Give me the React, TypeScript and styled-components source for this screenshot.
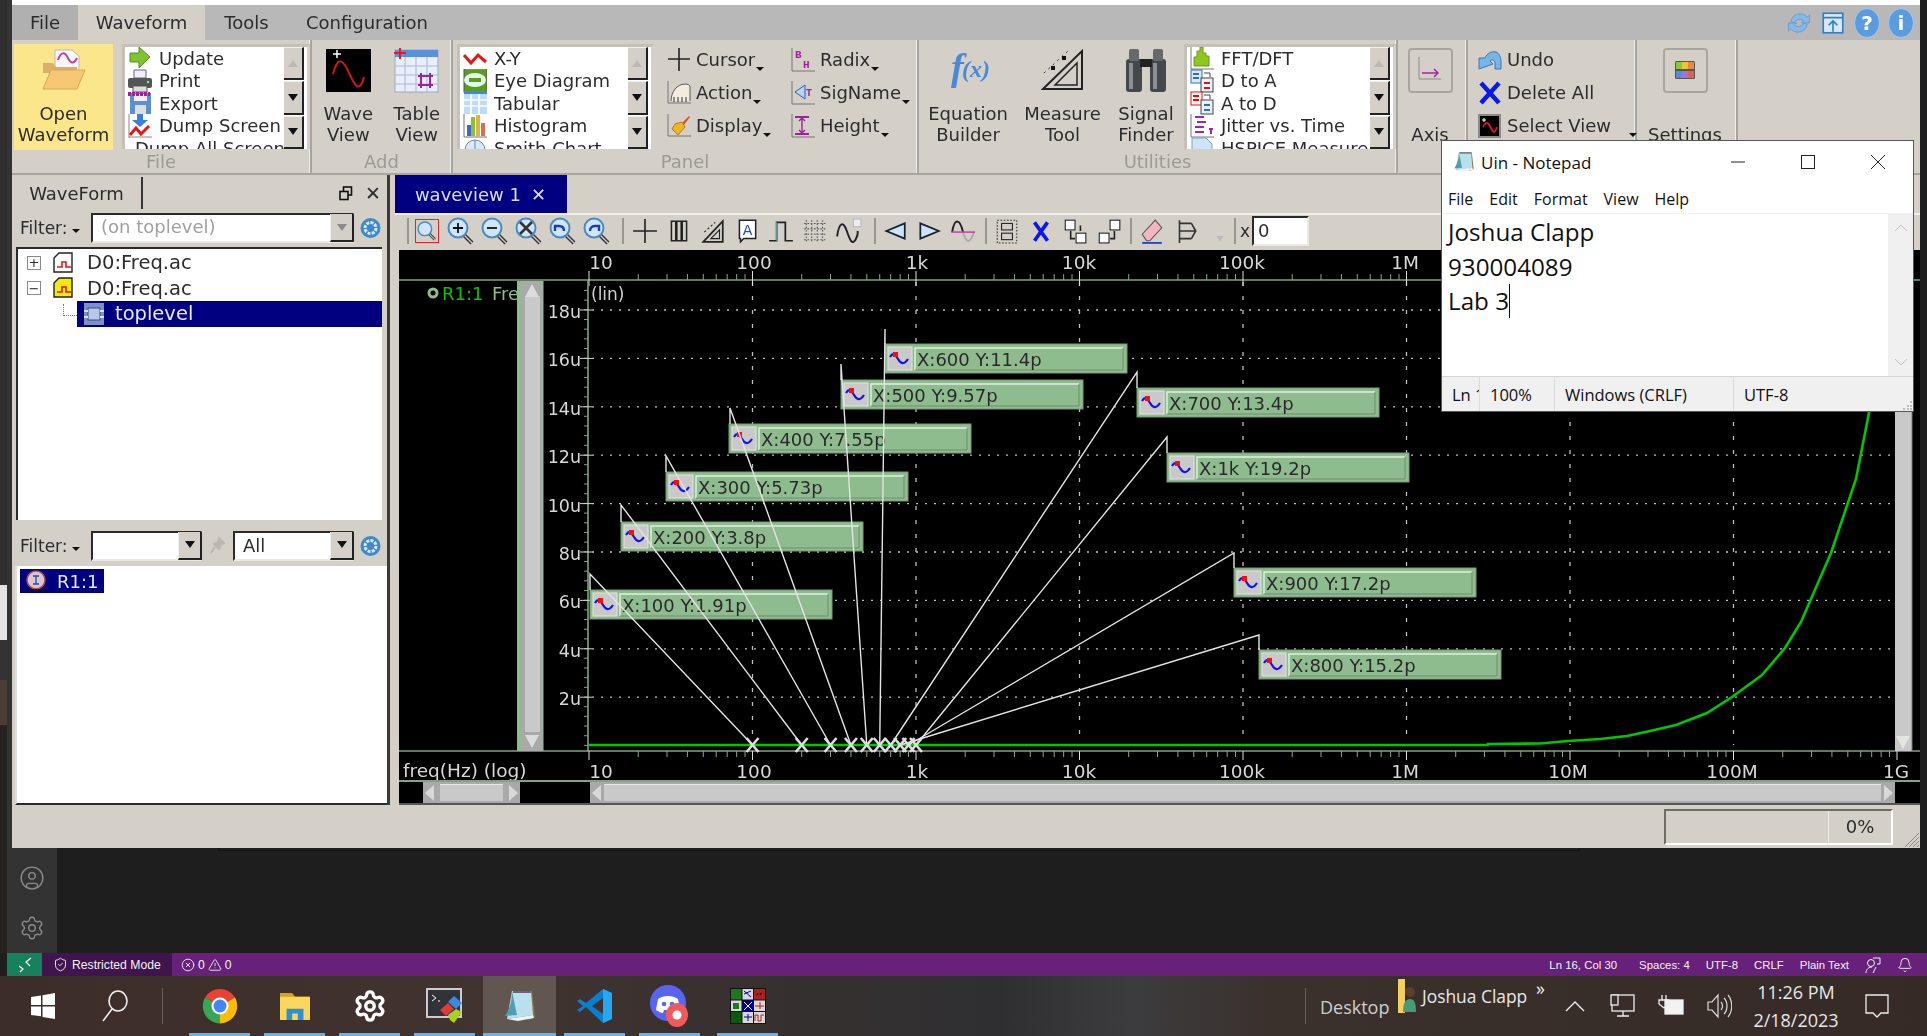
import React from "react";
import styled, { createGlobalStyle } from "styled-components";
import { CircleUser, Settings as GearIcon, ShieldCheck, Bell, CircleX, TriangleAlert } from "lucide-react";

const GlobalStyle = createGlobalStyle`
  html, body { margin: 0; padding: 0; background: #1e1e1e; overflow: hidden; }
  * { box-sizing: border-box; }
`;

const QT_FONT = `"DejaVu Sans", "Liberation Sans", sans-serif`;
const WIN_FONT = `"Open Sans", "Noto Sans", sans-serif`;
const UI_FONT = `"Liberation Sans", Arial, sans-serif`;

const Page = styled.div`
  width: 1927px;
  height: 1036px;
  display: flex;
  flex-direction: column;
  position: relative;
  overflow: hidden;
`;

/* ---- dark editor behind the windows ---- */
const Desk = styled.div`
  height: 976px;
  display: flex;
  flex-direction: column;
  background: #1e1e1e;
`;
const DeskRow = styled.div`
  flex: 1;
  display: flex;
`;
const EdgeStrip = styled.div`
  width: 7px;
  background: linear-gradient(#2f2f2f 0 585px, #e4e4e4 585px 640px, #333 640px 680px, #4a3d33 680px 725px, #252220 725px);
`;
const ActivityBar = styled.div`
  width: 50px;
  background: #333;
  display: flex;
  flex-direction: column;
  justify-content: flex-end;
  align-items: center;
  gap: 24px;
  padding-bottom: 12px;
  color: #8a8a8a;
`;
const Editor = styled.div`
  flex: 1;
  padding-left: 161px;
`;
const PanelEdge = styled.div`
  width: 1362px;
  height: 851px;
  border: 1px solid #111;
  border-top: 0;
`;
const VsStatus = styled.div`
  height: 23px;
  margin-left: 7px;
  background: #68217a;
  color: #f2f2f2;
  display: flex;
  align-items: center;
  font: 12.2px ${UI_FONT};
`;
const RemoteBtn = styled.div`
  width: 35px;
  height: 100%;
  background: #16825d;
  display: flex;
  align-items: center;
  justify-content: center;
`;
const Restricted = styled.div`
  width: 130px;
  height: 100%;
  background: #40144f;
  display: flex;
  align-items: center;
  gap: 4px;
  padding-left: 11px;
`;
const StatusCounts = styled.div`
  display: flex;
  align-items: center;
  gap: 3px;
  margin-left: 9px;
`;
const StatusRight = styled.div`
  margin-left: auto;
  display: flex;
  align-items: center;
  gap: 16px;
  padding-right: 14px;
  font-size: 11.4px;
`;
const StatusPos = styled.span`
  margin-right: 6px;
`;

/* ---- Qt window ---- */
const QtWindow = styled.div`
  position: absolute;
  left: 12px;
  top: 0;
  width: 1908px;
  height: 848px;
  display: flex;
  flex-direction: column;
  background: #d4d0c8;
  color: #2c2c2c;
  font: 18px ${QT_FONT};
  filter: blur(0.4px);
`;
const TopEdge = styled.div`
  height: 5px;
  background: #fff;
`;
const MenuBar = styled.div`
  height: 35px;
  background: #b8b8b8;
  display: flex;
  align-items: stretch;
`;
const MenuTab = styled.div<{ $w: number; $active?: boolean; $dim?: boolean }>`
  width: ${(p) => p.$w}px;
  display: flex;
  align-items: center;
  justify-content: center;
  font-size: 18px;
  background: ${(p) => (p.$active ? "#d4d0c8" : p.$dim ? "#b0b0b0" : "transparent")};
`;
const MenuRight = styled.div`
  margin-left: auto;
  display: flex;
  align-items: center;
  padding-right: 2px;
`;
const HelpIcon = styled.div`
  width: 34px;
  display: flex;
  justify-content: center;
`;
const Ribbon = styled.div`
  height: 135px;
  display: flex;
  border-bottom: 2px solid #a8a59e;
`;
const Group = styled.div<{ $w: number }>`
  width: ${(p) => p.$w}px;
  height: 133px;
  display: flex;
  flex-direction: column;
  border-right: 2px solid #a8a59e;
  box-shadow: inset -1px 0 0 #eee;
  padding-top: 4px;
`;
const GroupBody = styled.div`
  height: 107px;
  display: flex;
  align-items: flex-start;
`;
const GroupLabel = styled.div`
  text-align: center;
  color: #9c9a94;
  line-height: 21px;
`;
const OpenTile = styled.div`
  width: 99px;
  height: 106px;
  margin-left: 2px;
  background: #fce68c;
  display: flex;
  flex-direction: column;
  align-items: center;
  padding-top: 4px;
  line-height: 21px;
  text-align: center;
`;
const BigTool = styled.div<{ $w: number; $ml?: number }>`
  width: ${(p) => p.$w}px;
  margin-left: ${(p) => p.$ml ?? 0}px;
  display: flex;
  flex-direction: column;
  align-items: center;
  text-align: center;
  line-height: 21px;
  padding-top: 4px;
`;
const IconSlot = styled.div`
  height: 44px;
  margin-bottom: 11px;
  display: flex;
  align-items: center;
  justify-content: center;
`;
const FlatButton = styled.div`
  width: 45px;
  height: 45px;
  border: 2px solid #a9a69f;
  border-radius: 4px;
  display: flex;
  align-items: center;
  justify-content: center;
`;
const ListBox = styled.div<{ $w: number; $ml: number }>`
  width: ${(p) => p.$w}px;
  height: 105px;
  margin-left: ${(p) => p.$ml}px;
  display: flex;
  background: #fff;
  border: 3px solid #c4c1b9;
  border-bottom: 0;
  border-right-color: #d4d0c8;
  overflow: hidden;
`;
const ListItems = styled.div`
  flex: 1;
  min-width: 0;
  overflow: hidden;
`;
const ListItem = styled.div`
  height: 22.5px;
  display: flex;
  align-items: center;
  gap: 7px;
  padding-left: 3px;
  white-space: nowrap;
  font-size: 18px;
`;
const ListScroll = styled.div`
  width: 20px;
  display: flex;
  flex-direction: column;
  gap: 1px;
  margin-right: 3px;
`;
const ScrollStep = styled.div`
  flex: 1;
  background: #d4d0c8;
  border-right: 2px solid #222;
  border-bottom: 2px solid #222;
  border-top: 1px solid #eee;
  display: flex;
  align-items: center;
  justify-content: center;
`;
const ArrowDown = styled.div<{ $color?: string }>`
  width: 0;
  height: 0;
  border-left: 5px solid transparent;
  border-right: 5px solid transparent;
  border-top: 7px solid ${(p) => p.$color || "#111"};
`;
const ArrowUp = styled.div`
  width: 0;
  height: 0;
  border-left: 5px solid transparent;
  border-right: 5px solid transparent;
  border-bottom: 7px solid #bdbab3;
`;
const ToolGrid = styled.div`
  margin: -1px 0 0 13px;
  display: grid;
  grid-template-columns: 124px 124px;
  grid-auto-rows: 33px;
`;
const ToolColumn = styled.div`
  margin: -1px 0 0 10px;
  display: grid;
  grid-auto-rows: 33px;
`;
const ToolRow = styled.div<{ $gap?: number }>`
  display: flex;
  align-items: center;
  gap: ${(p) => p.$gap ?? 5}px;
  white-space: nowrap;
  font-size: 18px;
`;
const MiniCaret = styled.span<{ $flush?: boolean }>`
  align-self: flex-end;
  margin: ${(p) => (p.$flush ? "0 0 5px 0" : "0 0 5px -4px")};
  width: 0;
  height: 0;
  border-left: 4px solid transparent;
  border-right: 4px solid transparent;
  border-top: 4px solid #111;
`;

/* ---- body ---- */
const Body = styled.div`
  height: 630px;
  display: flex;
  gap: 5px;
`;
const Dock = styled.div`
  width: 378px;
  display: flex;
  flex-direction: column;
  border-right: 3px solid #3a3a3a;
`;
const DockHead = styled.div`
  height: 34px;
  display: flex;
  align-items: center;
  padding-top: 2px;
`;
const DockTab = styled.div`
  width: 131px;
  height: 100%;
  display: flex;
  align-items: center;
  justify-content: center;
  border-right: 2px solid #333;
`;
const DockBtns = styled.div`
  margin-left: auto;
  display: flex;
  align-items: center;
  gap: 12px;
  padding-right: 6px;
  font-size: 19px;
`;
const FilterRow = styled.div<{ $h: number; $pt?: number }>`
  height: ${(p) => p.$h}px;
  display: flex;
  align-items: center;
  padding: ${(p) => p.$pt ?? 0}px 0 0 8px;
`;
const FilterLabel = styled.div`
  width: 71px;
  font-size: 17px;
  display: flex;
  align-items: center;
  gap: 4px;
`;
const Combo = styled.div<{ $w: number; $muted?: boolean }>`
  width: ${(p) => p.$w}px;
  height: 30px;
  display: flex;
  align-items: center;
  background: #fff;
  border: 2px solid #2b2b2b;
  border-right-color: #d4d0c8;
  border-bottom-color: #ece9e2;
  padding-left: 8px;
  font-size: 18px;
  color: ${(p) => (p.$muted ? "#a0a0a0" : "#2c2c2c")};
`;
const ComboText = styled.span`
  margin-top: -3px;
`;
const ComboArrow = styled.div`
  margin-left: auto;
  width: 24px;
  height: 28px;
  background: #d4d0c8;
  border-left: 1px solid #eee;
  border-right: 2px solid #222;
  border-bottom: 2px solid #222;
  display: flex;
  align-items: center;
  justify-content: center;
  margin-right: -2px;
`;
const GearSlot = styled.div`
  margin-left: 6px;
  display: flex;
`;
const PinSlot = styled.div`
  width: 31px;
  display: flex;
  justify-content: center;
`;
const TreeBox = styled.div`
  height: 273px;
  margin-left: 4px;
  width: 366px;
  background: #fff;
  border-top: 2px solid #2b2b2b;
  border-left: 2px solid #2b2b2b;
  padding-top: 1px;
  font-size: 19.5px;
`;
const TreeRow = styled.div<{ $pad: number }>`
  height: 25.5px;
  display: flex;
  align-items: center;
  padding-left: ${(p) => p.$pad}px;
`;
const Expander = styled.div`
  width: 14px;
  height: 14px;
  border: 1px solid #8a8a8a;
  display: flex;
  align-items: center;
  justify-content: center;
  font: 13px/1 ${QT_FONT};
  margin-right: 12px;
`;
const TreeText = styled.span`
  margin-left: 12px;
`;
const SelectedRow = styled.div`
  flex: 1;
  height: 26px;
  background: #000080;
  color: #e8e8f4;
  display: flex;
  align-items: center;
  padding-left: 6px;
  gap: 10px;
`;
const TreeStub = styled.div`
  width: 14px;
  height: 12px;
  margin-bottom: 8px;
  border-left: 1px dotted #777;
  border-bottom: 1px dotted #777;
`;
const SignalBox = styled.div`
  flex: 1;
  margin-left: 3px;
  background: #fff;
  border-left: 2px solid #ddd;
  border-bottom: 2px solid #2b2b2b;
  padding: 3px 0 0 3px;
  font-size: 18px;
`;
const SignalChip = styled.div`
  width: 84px;
  height: 24px;
  background: #000080;
  color: #e8e8f4;
  display: flex;
  align-items: center;
  padding-left: 5px;
  gap: 10px;
`;
const RightPane = styled.div`
  flex: 1;
  min-width: 0;
  display: flex;
  flex-direction: column;
`;
const TabRow = styled.div`
  height: 38px;
  display: flex;
`;
const WaveTab = styled.div`
  width: 172px;
  background: #000080;
  color: #dcdcf0;
  display: flex;
  align-items: center;
  justify-content: center;
  gap: 10px;
  padding-right: 1px;
  font-size: 18px;
`;
const Toolbar = styled.div`
  height: 37px;
  display: flex;
  align-items: center;
  padding: 0 0 3px 12px;
  border-top: 2px solid #f0eee8;
`;
const ToolSep = styled.div<{ $ml?: number; $mr?: number }>`
  width: 2px;
  height: 26px;
  background: #9a978f;
  margin: 0 ${(p) => p.$mr ?? 1}px 0 ${(p) => p.$ml ?? 0}px;
`;
const ToolCell = styled.div`
  width: 34px;
  display: flex;
  justify-content: center;
  align-items: center;
`;
const ActiveZoom = styled.div`
  width: 24px;
  height: 24px;
  border: 1.5px solid #e8222a;
  display: flex;
  align-items: center;
  justify-content: center;
`;
const OffsetInput = styled.div`
  width: 57px;
  height: 30px;
  margin-left: 2px;
  background: #fff;
  border: 2px solid #2b2b2b;
  border-right-color: #ece9e2;
  border-bottom-color: #ece9e2;
  padding-left: 4px;
  font-size: 18px;
  line-height: 25px;
`;
const OffsetLabel = styled.div`
  margin-left: 4px;
  font-size: 17px;
`;
const ChartPane = styled.div`
  flex: 1;
  margin-left: 4px;
  background: #000;
  display: flex;
  flex-direction: column;
`;
const PlotSvg = styled.svg`
  display: block;
  flex: none;
  font-family: ${QT_FONT};
`;
const HScrollRow = styled.div`
  height: 25px;
  display: flex;
  border-top: 2px solid #84a284;
  border-bottom: 2px solid #555;
`;
const HTrack = styled.div<{ $w: number; $ml: number }>`
  width: ${(p) => p.$w}px;
  margin-left: ${(p) => p.$ml}px;
  background: #a9a9a9;
  display: flex;
  align-items: stretch;
  padding: 2px 2px;
  gap: 3px;
`;
const HThumb = styled.div<{ $inset: number }>`
  flex: 1;
  margin: 0 ${(p) => p.$inset}px;
  background: #c9c9c9;
  border-top: 1px solid #e6e6e6;
`;
const HArrowL = styled.div`
  align-self: center;
  width: 0;
  height: 0;
  border-top: 8px solid transparent;
  border-bottom: 8px solid transparent;
  border-right: 9px solid #d8d8d8;
`;
const HArrowR = styled.div`
  align-self: center;
  width: 0;
  height: 0;
  border-top: 8px solid transparent;
  border-bottom: 8px solid transparent;
  border-left: 9px solid #d8d8d8;
`;
const WinStatus = styled.div`
  height: 43px;
  display: flex;
  align-items: center;
  justify-content: flex-end;
  padding-right: 27px;
  position: relative;
`;
const Progress = styled.div`
  width: 229px;
  height: 36px;
  display: flex;
  border: 2px solid #6f6d68;
  border-right-color: #fff;
  border-bottom-color: #fff;
`;
const ProgressFill = styled.div`
  flex: 1;
`;
const ProgressPct = styled.div`
  width: 63px;
  display: flex;
  align-items: center;
  justify-content: center;
  border-left: 1px solid #f0eee8;
`;
const Grip = styled.svg`
  position: absolute;
  right: 0;
  bottom: 0;
`;

/* ---- notepad ---- */
const Notepad = styled.div`
  position: absolute;
  left: 1441px;
  top: 140px;
  width: 473px;
  height: 272px;
  background: #fff;
  border: 1px solid #555;
  color: #111;
  display: flex;
  flex-direction: column;
  font-family: ${WIN_FONT};
`;
const NoteTitle = styled.div`
  height: 42px;
  display: flex;
  align-items: center;
  padding-left: 11px;
  gap: 6px;
  font-size: 17px;
`;
const NoteControls = styled.div`
  margin-left: auto;
  display: flex;
  color: #222;
`;
const NoteControl = styled.div`
  width: 70px;
  display: flex;
  justify-content: center;
  align-items: center;
`;
const NoteMenu = styled.div`
  height: 31px;
  display: flex;
  align-items: center;
  gap: 16px;
  padding: 2px 0 0 6px;
  font-size: 16px;
  border-bottom: 1px solid #f0f0f0;
`;
const NoteBody = styled.div`
  flex: 1;
  display: flex;
  min-height: 0;
`;
const NoteText = styled.div`
  flex: 1;
  padding: 1px 0 0 6px;
  font-size: 24.2px;
  line-height: 34.5px;
`;
const Caret = styled.span`
  display: inline-block;
  width: 1px;
  height: 34px;
  background: #111;
  vertical-align: top;
`;
const NoteScroll = styled.div`
  width: 25px;
  background: #f0f0f0;
  display: flex;
  flex-direction: column;
  justify-content: space-between;
  align-items: center;
  padding: 8px 0 8px;
  color: #b4b4b4;
`;
const NoteStatus = styled.div`
  height: 35px;
  background: #f0f0f0;
  border-top: 1px solid #d6d6d6;
  display: flex;
  align-items: stretch;
  font-size: 16.5px;
  position: relative;
`;
const NoteCell = styled.div<{ $w: number }>`
  width: ${(p) => p.$w}px;
  display: flex;
  align-items: center;
  padding-left: 10px;
  border-right: 1px solid #dcdcdc;
  white-space: nowrap;
  overflow: hidden;
`;
const NoteLast = styled.div`
  display: flex;
  align-items: center;
  padding-left: 10px;
`;

/* ---- taskbar ---- */
const Taskbar = styled.div`
  height: 60px;
  display: flex;
  align-items: stretch;
  color: #e8e8e8;
  font-family: ${WIN_FONT};
  background: linear-gradient(90deg, #3c2d29 0, #41332f 500px, #35302f 800px, #2f2f32 1000px, #3c3c3e 1130px, #3a302c 1280px, #352a26 100%);
`;
const TaskPlain = styled.div<{ $w: number; $pl?: number }>`
  width: ${(p) => p.$w}px;
  padding-left: ${(p) => p.$pl ?? 0}px;
  display: flex;
  align-items: center;
  justify-content: center;
`;
const TaskDivider = styled.div`
  width: 1px;
  height: 36px;
  align-self: center;
  background: #6a615c;
`;
const TaskApp = styled.div<{ $active?: boolean; $w?: number; $ml?: number }>`
  width: ${(p) => p.$w ?? 61}px;
  margin-left: ${(p) => p.$ml ?? 14}px;
  display: flex;
  align-items: center;
  justify-content: center;
  padding-top: 3px;
  border-bottom: 3px solid #63b3f0;
  background: ${(p) => (p.$active ? "#615650" : "transparent")};
`;
const TrayArea = styled.div`
  margin-left: auto;
  display: flex;
  align-items: stretch;
  padding-right: 22px;
`;
const DesktopLabel = styled.div`
  margin-left: 14px;
  width: 78px;
  font-size: 18px;
  display: flex;
  align-items: center;
  padding-top: 2px;
  color: #cfcfcf;
`;
const Deskband = styled.div`
  width: 153px;
  height: 40px;
  display: flex;
  align-items: center;
  gap: 6px;
  font-size: 17.4px;
  position: relative;
  white-space: nowrap;
`;
const More = styled.span`
  position: absolute;
  right: 6px;
  top: 3px;
  font-size: 18px;
  line-height: 18px;
`;
const TraySlot = styled.div`
  width: 48px;
  display: flex;
  align-items: center;
  justify-content: center;
`;
const Clock = styled.div`
  width: 106px;
  display: flex;
  flex-direction: column;
  align-items: center;
  justify-content: center;
  gap: 8px;
  font-size: 18px;
  line-height: 20px;
`;
const Notify = styled.div`
  width: 56px;
  display: flex;
  align-items: center;
  justify-content: center;
`;

/* ---- icons ---- */
const Ico = ({ s = 24, children }: { s?: number; children: React.ReactNode }) => (
  <svg width={s} height={s} viewBox="0 0 24 24" fill="none">
    {children}
  </svg>
);

const OpenIcon = () => (
  <svg width="46" height="44" viewBox="0 0 46 44" fill="none">
    <path d="M14 2h17l7 6v18H14z" fill="#f7f7f7" stroke="#bbb" />
    <path d="M17 12c3-9 7-8 10-2s6 6 9 0" stroke="#c0409a" strokeWidth="2" />
    <path d="M2 15h10l3 4h21v6H2z" fill="#dcae66" />
    <path d="M10 22h34l-8 19H2z" fill="#f6c873" stroke="#d8a558" />
  </svg>
);
const WaveViewIcon = () => (
  <svg width="45" height="43" viewBox="0 0 45 43">
    <rect width="45" height="43" fill="#000" />
    <path d="M7 5h8M11 1v8" stroke="#fff" strokeWidth="1.5" />
    <path d="M7 25C12 6 17 10 24 26s11 14 14 2" stroke="#d01818" strokeWidth="2" fill="none" />
  </svg>
);
const TableViewIcon = () => (
  <svg width="45" height="45" viewBox="0 0 45 45">
    <rect x="1" y="2" width="43" height="42" fill="#e8eefa" stroke="#9ab" />
    <rect x="1" y="2" width="43" height="7" fill="#5a8ee0" />
    <path d="M1 18h43M1 27h43M1 36h43M11 9v35M22 9v35M33 9v35" stroke="#a8b8d8" />
    <path d="M24 28h15M24 37h15M27 25v15M36 25v15" stroke="#a020a0" strokeWidth="2" />
    <path d="M0 5h12M6 0v11" stroke="#f01818" strokeWidth="2" />
  </svg>
);
const UpdateIcon = () => (
  <Ico>
    <path d="M2 7h9V1l11 10-11 11v-6H2z" fill="#7cc52e" stroke="#5b8a20" />
  </Ico>
);
const PrintIcon = () => (
  <Ico>
    <path d="M6 1h12v8H6z" fill="#eef" stroke="#667" />
    <rect x="0" y="9" width="24" height="10" rx="2" fill="#555" />
    <rect x="5" y="17" width="14" height="6" fill="#ddd" stroke="#555" />
    <circle cx="20" cy="13" r="1.2" fill="#6f6" />
  </Ico>
);
const ExportIcon = () => (
  <Ico>
    <rect x="2" y="2" width="21" height="21" fill="#5b8fcf" />
    <rect x="7" y="14" width="11" height="9" fill="#ddd" />
    <rect x="6" y="3" width="13" height="7" fill="#eef" />
    <path d="M0 3h22" stroke="#a020a0" strokeWidth="4" strokeDasharray="3 1" />
  </Ico>
);
const DumpIcon = () => (
  <Ico>
    <path d="M1 0v24M1 23h23" stroke="#888" />
    <path d="M9 0h6v6h5l-8 7-8-7h5z" fill="#3a7fe0" />
    <path d="M2 21l6-7 5 6 8-8" stroke="#e01818" strokeWidth="3" />
  </Ico>
);
const XYIcon = () => (
  <Ico>
    <path d="M1 9l7 8 7-8 8 7" stroke="#e01818" strokeWidth="3" />
  </Ico>
);
const EyeIcon = () => (
  <Ico>
    <rect x="1" y="0" width="23" height="23" fill="#5e9a1e" stroke="#555" />
    <ellipse cx="12" cy="11" rx="11" ry="7" fill="#dfe" />
    <rect x="6" y="9" width="12" height="4" fill="#5e9a1e" />
    <path d="M2 0h21" stroke="#7c7" />
  </Ico>
);
const TabularIcon = () => (
  <Ico>
    <rect x="1" y="0" width="23" height="3" fill="#3a8ae0" />
    <rect x="1" y="3" width="23" height="20" fill="#bcdcfa" />
    <path d="M1 9h23M1 15h23M8 3v20M16 3v20" stroke="#fff" strokeWidth="1.5" />
  </Ico>
);
const HistIcon = () => (
  <Ico>
    <path d="M1 0v23h23" stroke="#777" />
    <rect x="4" y="11" width="4" height="11" fill="#3a6ad0" />
    <rect x="8" y="3" width="4" height="19" fill="#8cc03a" />
    <rect x="13" y="1" width="4" height="21" fill="#d8b83a" />
    <rect x="18" y="9" width="4" height="13" fill="#e06a5a" />
  </Ico>
);
const SmithIcon = () => (
  <Ico>
    <circle cx="12" cy="14" r="10" fill="#dde8f6" stroke="#6688aa" />
    <path d="M2 14h20M12 4v20" stroke="#6688aa" />
  </Ico>
);
const FftIcon = () => (
  <Ico>
    <path d="M1 0v23h23" stroke="#777" />
    <path d="M4 20V11h3V5h3V1h3v6h3v3h3v10z" fill="#8cc820" stroke="#6a9a10" />
  </Ico>
);
const ConvIcon = ({ from, to }: { from: string; to: string }) => (
  <Ico>
    <rect x="1" y="1" width="11" height="13" fill={from === "red" ? "#fff" : "#dde8f6"} stroke={from} />
    <path d="M3 5h6M3 9h6" stroke={from} strokeWidth="2" />
    <rect x="11" y="9" width="12" height="14" fill={to === "red" ? "#fee" : "#e8f0fc"} stroke="#444" />
    <path d="M14 14h6M14 19h6" stroke={to} strokeWidth="2" />
    <path d="M14 4h6v4" stroke="#444" />
  </Ico>
);
const JitterIcon = () => (
  <Ico>
    <path d="M1 0v23h23" stroke="#777" />
    <path d="M5 3h9M7 8h9M5 13h9M5 18h9M19 15h4M21 15v5" stroke="#a020c0" strokeWidth="2" />
  </Ico>
);
const HspiceIcon = () => (
  <Ico>
    <path d="M2 2h14l6 6v16H2z" fill="#cfe4fa" stroke="#7aa" />
  </Ico>
);
const CursorIcon = () => (
  <Ico>
    <path d="M1 11h22M12 0v23" stroke="#222" strokeWidth="1.6" />
  </Ico>
);
const ActionIcon = () => (
  <Ico>
    <path d="M1 0v22h23" stroke="#777" />
    <path d="M4 20c0-9 6-17 14-17 3 0 5 1 5 3v14" fill="#f2ece0" stroke="#555" />
    <path d="M7 21v-5M11 21v-5M15 21v-5M19 21v-5" stroke="#333" />
  </Ico>
);
const DisplayIcon = () => (
  <Ico>
    <path d="M1 0v22h23" stroke="#777" />
    <path d="M15 9l7-7 1 1-6 8z" fill="#d8541e" />
    <path d="M8 10l7-2 3 5-7 8-6-6z" fill="#f0b428" stroke="#b87d10" />
  </Ico>
);
const RadixIcon = () => (
  <Ico>
    <path d="M1 0v23h23" stroke="#777" />
    <text x="4" y="10" fontSize="11" fontWeight="700" fontFamily="Liberation Mono" fill="#a020a0">B</text>
    <text x="12" y="20" fontSize="11" fontWeight="700" fontFamily="Liberation Mono" fill="#a020a0">H</text>
  </Ico>
);
const SigNameIcon = () => (
  <Ico>
    <path d="M1 0v23h23" stroke="#777" />
    <path d="M14 4v14L4 11z" fill="#b8d4f4" stroke="#2b5fa8" />
    <text x="15" y="15" fontSize="10" fontWeight="700" fontFamily="Liberation Mono" fill="#a020a0">T</text>
  </Ico>
);
const HeightIcon = () => (
  <Ico>
    <path d="M1 0v23h23" stroke="#777" />
    <path d="M4 3h14M4 20h14" stroke="#a020a0" strokeWidth="2" />
    <path d="M11 4v15M8 7l3-3 3 3M8 16l3 3 3-3" stroke="#a020a0" strokeWidth="1.4" />
  </Ico>
);
const FxIcon = () => (
  <svg width="50" height="44" viewBox="0 0 50 44" fill="none">
    <text x="8" y="32" fontFamily="Liberation Serif" fontStyle="italic" fontWeight="700" fontSize="38" fill="#4a88d8">f</text>
    <text x="19" y="29" fontFamily="Liberation Serif" fontStyle="italic" fontWeight="700" fontSize="24" fill="#4a88d8">(x)</text>
  </svg>
);
const MeasureIcon = () => (
  <svg width="44" height="44" viewBox="0 0 44 44" fill="none">
    <path d="M2 41L41 3v38z" stroke="#222" strokeWidth="2" />
    <path d="M14 37L36 15v22z" stroke="#222" strokeWidth="1.5" />
    <path d="M3 25L27 3" stroke="#222" strokeDasharray="2 4" />
    <rect x="10" y="18" width="4" height="4" fill="#111" />
    <rect x="21" y="8" width="4" height="4" fill="#111" />
  </svg>
);
const BinocularIcon = () => (
  <svg width="42" height="44" viewBox="0 0 42 44">
    <rect x="1" y="11" width="16" height="33" rx="3" fill="#44484c" />
    <rect x="25" y="11" width="16" height="33" rx="3" fill="#44484c" />
    <rect x="4" y="1" width="10" height="12" rx="2" fill="#666a6e" />
    <rect x="28" y="1" width="10" height="12" rx="2" fill="#666a6e" />
    <rect x="15" y="11" width="12" height="8" fill="#222" />
    <rect x="4" y="15" width="4" height="26" fill="#8a9096" />
    <rect x="28" y="15" width="4" height="26" fill="#8a9096" />
  </svg>
);
const AxisIcon = () => (
  <svg width="28" height="26" viewBox="0 0 28 26" fill="none">
    <path d="M3 0v22h22" stroke="#8a8a8a" />
    <path d="M6 16h16M18 12l4 4-4 4" stroke="#b020a0" strokeWidth="1.5" />
  </svg>
);
const UndoIcon = () => (
  <Ico>
    <path d="M1 21V10h6C9 5 14 3 18 4c3 1 5 5 5 10v7h-6v-6c0-3-3-4-5-2l3 3z" fill="#78b4e8" stroke="#3a78b8" />
  </Ico>
);
const DeleteIcon = () => (
  <Ico>
    <path d="M3 2l18 20M21 2L3 22" stroke="#0a18e8" strokeWidth="4.5" />
  </Ico>
);
const SelectIcon = () => (
  <Ico>
    <rect x="1" y="1" width="21" height="22" fill="#000" stroke="#8a8a8a" strokeWidth="2" />
    <path d="M5 13c3-6 5-5 8 1s4 5 6-1" stroke="#e01818" strokeWidth="1.8" />
    <path d="M4 6h4M6 4v4" stroke="#fff" />
  </Ico>
);
const PaletteIcon = () => (
  <Ico>
    <rect x="2" y="3" width="20" height="18" rx="1.5" fill="#555" />
    <rect x="3" y="4" width="6" height="7" fill="#8cc83a" />
    <rect x="9" y="4" width="6" height="7" fill="#e8c83a" />
    <rect x="15" y="4" width="6" height="7" fill="#e88a3a" />
    <rect x="3" y="13" width="6" height="7" fill="#5a8ae0" />
    <rect x="9" y="13" width="6" height="7" fill="#9a78d0" />
    <rect x="15" y="13" width="6" height="7" fill="#e06060" />
  </Ico>
);
const RefreshIcon = () => (
  <Ico s={28}>
    <path d="M5 11a8 8 0 0 1 14-4l2-2v7h-7l2-2a5 5 0 0 0-8 2zM19 13a8 8 0 0 1-14 4l-2 2v-7h7l-2 2a5 5 0 0 0 8-2z" fill="#8ab8e4" stroke="#5a94cc" strokeWidth=".6" />
  </Ico>
);
const PanelUpIcon = () => (
  <Ico s={26}>
    <rect x="3" y="3" width="18" height="18" stroke="#2f7fc8" strokeWidth="1.5" fill="#d8e8f4" />
    <path d="M3 7h18M12 20v-9M8 14l4-4 4 4" stroke="#2f7fc8" strokeWidth="1.5" />
  </Ico>
);
const RoundBlue = ({ ch }: { ch: string }) => (
  <svg width="26" height="30" viewBox="0 0 26 30">
    <ellipse cx="13" cy="15" rx="12.5" ry="14.5" fill="#5a9ce0" stroke="#a4c8ec" />
    <text x="13" y="22" textAnchor="middle" fontSize="20" fontWeight="700" fontFamily="DejaVu Sans" fill="#fff">{ch}</text>
  </svg>
);
const FilterGear = () => (
  <svg width="21" height="22" viewBox="0 0 21 22">
    <circle cx="10.5" cy="11" r="10" fill="#3e88cc" />
    <circle cx="10.5" cy="11" r="5.5" fill="none" stroke="#d8e8f6" strokeWidth="3" strokeDasharray="3 1.2" />
  </svg>
);
const DocIcon = ({ fill }: { fill: string }) => (
  <svg width="22" height="22" viewBox="0 0 22 22" fill="none">
    <path d="M1 6l5-5h13v19H1z" fill={fill} stroke="#222" strokeWidth="1.4" />
    <path d="M4 15h5v-5h4v5h5" stroke="#e01818" strokeWidth="1.6" />
  </svg>
);
const ModuleIcon = () => (
  <svg width="22" height="24" viewBox="0 0 22 24">
    <rect x="1" y="1" width="20" height="22" fill="#7f8fc8" />
    <rect x="5" y="6" width="12" height="12" fill="#b8c8ea" stroke="#34508c" />
    <path d="M1 9h4M1 15h4M17 9h4M17 15h4" stroke="#dfe6f6" strokeWidth="2" />
  </svg>
);
const ResistorIcon = () => (
  <svg width="22" height="22" viewBox="0 0 22 22">
    <circle cx="11" cy="10" r="9" fill="#d9c6d2" stroke="#b04a50" strokeWidth="1.5" />
    <path d="M8 6h6M11 6v8M8 14h6" stroke="#2a4a9a" strokeWidth="1.3" />
    <path d="M1 20h20" stroke="#111" strokeWidth="2" strokeDasharray="2 1" />
  </svg>
);
const PinIcon = () => (
  <svg width="16" height="20" viewBox="0 0 16 20" fill="none">
    <path d="M9 2l5 5-3 2-2 4-5-5 4-2zM5 11l-4 6" stroke="#bbb8b0" strokeWidth="2" fill="#bbb8b0" />
  </svg>
);
const Lens = ({ children, s = 28 }: { children?: React.ReactNode; s?: number }) => (
  <svg width={s} height={s} viewBox="0 0 28 28" fill="none">
    <path d="M17 18l8 8" stroke="#333" strokeWidth="4" />
    <path d="M17 18l8 8" stroke="#ccc" strokeWidth="1.5" />
    <circle cx="11" cy="11" r="9.5" fill="#cfe6fa" stroke="#4a8ac4" strokeWidth="2" />
    {children}
  </svg>
);
const ToolGlyph = ({ children }: { children: React.ReactNode }) => <Ico s={26}>{children}</Ico>;

const toolGroupA = [
  <Lens key="p"><path d="M6 11h10M11 6v10" stroke="#111" strokeWidth="1.8" /></Lens>,
  <Lens key="m"><path d="M6 11h10" stroke="#111" strokeWidth="1.8" /></Lens>,
  <Lens key="f"><path d="M5 5l12 12M17 5L5 17" stroke="#333" strokeWidth="2.6" /></Lens>,
  <Lens key="u"><path d="M6 14V9h4c2 0 5 1 5 5" stroke="#1a3ac8" strokeWidth="2.4" /></Lens>,
  <Lens key="r"><path d="M16 14V9h-4c-2 0-5 1-5 5" stroke="#1a3ac8" strokeWidth="2.4" /></Lens>,
];
const toolGroupB = [
  <ToolGlyph key="a"><path d="M1 12h22M12 1v22" stroke="#222" strokeWidth="1.5" /></ToolGlyph>,
  <ToolGlyph key="b"><path d="M5 3h4v18H5zM10 3h4v18h-4zM15 3h4v18h-4z" stroke="#222" strokeWidth="1.4" /></ToolGlyph>,
  <ToolGlyph key="c"><path d="M3 22L21 3v19z" stroke="#222" strokeWidth="1.6" /><path d="M10 19l8-8v8z" stroke="#222" /><path d="M4 13l10-9" stroke="#222" strokeDasharray="2 2" /></ToolGlyph>,
  <ToolGlyph key="d"><path d="M5 2h15v17H9l-3 3v-3H5z" fill="#fff" stroke="#222" strokeWidth="1.4" /><text x="12.5" y="16" textAnchor="middle" fontSize="13" fontFamily="DejaVu Sans" fill="#1a4ac8">A</text></ToolGlyph>,
  <ToolGlyph key="e"><path d="M1 21h7V4h8v17h7" stroke="#222" strokeWidth="1.6" /><path d="M8 21V4" stroke="#6aa" /></ToolGlyph>,
  <ToolGlyph key="f"><path d="M4 2v21M9 2v21M14 2v21M19 2v21M2 5h20M2 10h20M2 15h20M2 20h20" stroke="#555" strokeDasharray="1.5 1.5" /></ToolGlyph>,
  <ToolGlyph key="g"><path d="M1 17C3 3 7 3 10 12s5 13 8 8 2-6 2-8" stroke="#222" strokeWidth="1.8" /><rect x="16" y="1" width="7" height="7" stroke="#bbb" fill="#eee" /></ToolGlyph>,
];
const toolGroupC = [
  <ToolGlyph key="l"><path d="M21 5v14L4 12z" fill="#cfe2f8" stroke="#123" strokeWidth="1.6" /></ToolGlyph>,
  <ToolGlyph key="r"><path d="M4 5v14l17-7z" fill="#cfe2f8" stroke="#123" strokeWidth="1.6" /></ToolGlyph>,
  <ToolGlyph key="w"><path d="M2 13C4 0 9 0 12 13" stroke="#222" strokeWidth="1.8" /><path d="M12 13c3 11 7 11 10 0" stroke="#aaa" strokeWidth="1.8" /><path d="M1 13h22" stroke="#c040b0" strokeWidth="1.4" /></ToolGlyph>,
];
const toolGroupD = [
  <ToolGlyph key="s"><rect x="3" y="2" width="18" height="21" stroke="#333" strokeDasharray="1.5 1.5" /><rect x="7" y="5" width="10" height="6" stroke="#222" /><rect x="7" y="14" width="10" height="6" stroke="#222" /></ToolGlyph>,
  <ToolGlyph key="x"><path d="M6 4l12 17M18 4L6 21" stroke="#0a18e8" strokeWidth="3.4" /></ToolGlyph>,
  <ToolGlyph key="c1"><rect x="3" y="2" width="9" height="9" fill="#fff" stroke="#222" /><rect x="13" y="14" width="9" height="9" fill="#fff" stroke="#222" /><path d="M8 12v7h4M17 7v5" stroke="#222" strokeWidth="1.5" /></ToolGlyph>,
  <ToolGlyph key="c2"><rect x="13" y="2" width="9" height="9" fill="#fff" stroke="#222" /><rect x="3" y="14" width="9" height="9" fill="#fff" stroke="#222" /><path d="M17 12v7h-4" stroke="#222" strokeWidth="1.5" /></ToolGlyph>,
];

/* ---- plot data ---- */
const xOf = (f: number) => 589 + 163.5 * (Math.log10(f) - 1);
const ZERO_Y = 745;
const Y_STEP = 48.4;
const yLabels = ["18u", "16u", "14u", "12u", "10u", "8u", "6u", "4u", "2u"];
const xLabels: [string, number][] = [["10", 601], ["100", 754], ["1k", 917], ["10k", 1079], ["100k", 1242], ["1M", 1405], ["10M", 1568], ["100M", 1732], ["1G", 1896]];
const decades = [10, 100, 1e3, 1e4, 1e5, 1e6, 1e7, 1e8, 1e9];
const minors = decades.slice(0, -1).flatMap((d) => [2, 3, 4, 5, 6, 7, 8, 9].map((m) => xOf(d * m)));

const markers = [
  { label: "X:600 Y:11.4p", f: 600, x: 885, y: 344, px: 885, py: 329 },
  { label: "X:500 Y:9.57p", f: 500, x: 841, y: 380, px: 841, py: 364 },
  { label: "X:400 Y:7.55p", f: 400, x: 729, y: 424, px: 730, py: 408 },
  { label: "X:300 Y:5.73p", f: 300, x: 666, y: 472, px: 666, py: 456 },
  { label: "X:200 Y:3.8p", f: 200, x: 621, y: 522, px: 621, py: 505 },
  { label: "X:100 Y:1.91p", f: 100, x: 590, y: 590, px: 590, py: 574 },
  { label: "X:700 Y:13.4p", f: 700, x: 1137, y: 388, px: 1137, py: 372 },
  { label: "X:1k Y:19.2p", f: 1000, x: 1167, y: 453, px: 1167, py: 437 },
  { label: "X:900 Y:17.2p", f: 900, x: 1234, y: 568, px: 1234, py: 553 },
  { label: "X:800 Y:15.2p", f: 800, x: 1259, y: 650, px: 1259, py: 635 },
];
const tracePts = "589,745 1488,745 1488,744 1540,743.5 1568,741 1600,739 1627,736 1650,731 1676,725 1707,713 1732,697 1762,675 1785,648 1801,622 1831,553 1856,479 1868,418 1880,350";

const MarkerBox = ({ x, y, label }: { x: number; y: number; label: string }) => (
  <g>
    <rect x={x} y={y} width={242} height={29} fill="#8fbc8f" stroke="#769a76" />
    <rect x={x + 3} y={y + 3} width={24} height={23} fill="#c9c9c9" stroke="#e4e4e4" />
    <path d={`M${x + 30} ${y + 26}V${y + 4}H${x + 238}`} stroke="#dfeedf" strokeWidth="1.5" fill="none" />
    <path d={`M${x + 30} ${y + 26}H${x + 238}V${y + 4}`} stroke="#6e8e6e" fill="none" />
    <path d={`M${x + 5} ${y + 13}c3-5 5-3 8 2s6 6 10 0`} stroke="#1010f0" strokeWidth="2.2" fill="none" />
    <rect x={x + 8} y={y + 8} width={5} height={5} fill="#f01010" />
    <text x={x + 32} y={y + 22} fontSize="18" fill="#2a2a2a">{label}</text>
  </g>
);

const Plot = () => (
  <PlotSvg width="1521" height="530" viewBox="399 250 1521 530">
    <rect x="399" y="250" width="1521" height="530" fill="#000" />
    {/* grid */}
    {yLabels.map((_, i) => (
      <path key={i} d={`M592 ${310 + i * Y_STEP}H1895`} stroke="#bdbdbd" strokeWidth="1.3" strokeDasharray="2 7" />
    ))}
    {decades.slice(1, -1).map((d) => (
      <path key={d} d={`M${xOf(d)} 282V745`} stroke="#bdbdbd" strokeWidth="1.3" strokeDasharray="4 10" />
    ))}
    {/* top and bottom axes */}
    <path d="M399 280H1920M399 751H1920" stroke="#7fa57f" strokeWidth="1.6" />
    {minors.map((x, i) => (
      <path key={i} d={`M${x} 274V280M${x} 751V757`} stroke="#8aa88a" />
    ))}
    {decades.map((d) => (
      <path key={d} d={`M${xOf(d)} 271V286M${xOf(d)} 751V760`} stroke="#e0e0e0" />
    ))}
    {xLabels.map(([t, x]) => (
      <text key={t} x={x} y="269" fontSize="18.5" textAnchor="middle" fill="#d8d8d8">{t}</text>
    ))}
    {xLabels.map(([t, x]) => (
      <text key={t} x={x} y="778" fontSize="18.5" textAnchor="middle" fill="#d8d8d8">{t}</text>
    ))}
    <text x="403" y="777" fontSize="18.5" fill="#d8d8d8">freq(Hz) (log)</text>
    {/* left axis */}
    <path d="M588 281V751" stroke="#7fa57f" strokeWidth="1.6" />
    {Array.from({ length: 48 }, (_, i) => (
      <path key={i} d={`M584 ${745.4 - i * (Y_STEP / 5)}H588`} stroke="#7fa57f" />
    ))}
    {yLabels.map((t, i) => (
      <g key={t}>
        <text x="581" y={318 + i * Y_STEP} fontSize="17.5" textAnchor="end" fill="#d8d8d8">{t}</text>
        <path d={`M580 ${310 + i * Y_STEP}H592`} stroke="#cfd8cf" />
      </g>
    ))}
    <text x="591" y="300" fontSize="17" fill="#cfcfcf">(lin)</text>
    {/* signal name */}
    <circle cx="433" cy="293" r="4" fill="none" stroke="#8fbc8f" strokeWidth="3" />
    <text x="442" y="300" fontSize="18" fill="#00c800">R1:1</text>
    <text x="492" y="300" fontSize="18" fill="#8fbc8f">Fre</text>
    {/* vertical scrollbars */}
    <rect x="517" y="281" width="4" height="470" fill="#8fbc8f" />
    <rect x="521" y="281" width="22" height="470" fill="#a9a9a9" />
    <rect x="525" y="296" width="15" height="436" fill="#c9c9c9" />
    <path d="M532 284l7 13h-14zM532 748l7-13h-14z" fill="#dcdcdc" />
    <path d="M543 281V751" stroke="#8fbc8f" />
    <rect x="1895" y="281" width="17" height="470" fill="#c9c9c9" />
    <path d="M1903 749l7-13h-14z" fill="#e4e4e4" />
    <path d="M1912 281V751" stroke="#777" />
    {/* markers */}
    {markers.map((m) => (
      <MarkerBox key={m.label} x={m.x} y={m.y} label={m.label} />
    ))}
    <polyline points={tracePts} fill="none" stroke="#00c800" strokeWidth="2.6" />
    {markers.map((m) => (
      <path key={m.label} d={`M${xOf(m.f)} ${ZERO_Y}L${m.px} ${m.py}V${m.y}`} stroke="#e4e4e4" strokeWidth="1.4" fill="none" />
    ))}
    {markers.map((m) => {
      const x = xOf(m.f);
      return <path key={m.label} d={`M${x - 6} ${ZERO_Y - 7}l12 14m0-14l-12 14`} stroke="#dedede" strokeWidth="2.6" />;
    })}
  </PlotSvg>
);

/* ---- taskbar icons ---- */
const WindowsLogo = () => (
  <svg width="26" height="26" viewBox="0 0 26 26" fill="#fff">
    <path d="M1 4l10-1.5V12H1zM12.5 2.300L25 0v12H12.500zM1 13.500h10v9.800L1 22zM12.500 13.500H25V26l-12.500-2z" />
  </svg>
);
const SearchGlyph = () => (
  <svg width="28" height="32" viewBox="0 0 28 32" fill="none" stroke="#f0f0f0" strokeWidth="1.6">
    <ellipse cx="17" cy="11" rx="9" ry="10" />
    <path d="M11 19L2 31" />
  </svg>
);
const ChromeLogo = () => (
  <svg width="36" height="36" viewBox="0 0 36 36">
    <path d="M18 18L3 9.500A17.500 17.500 0 0 1 33 9.500z" fill="#ea4335" />
    <path d="M18 18L33 9.500A17.500 17.500 0 0 1 18 35.500z" fill="#fbbc04" />
    <path d="M18 18L18 35.500A17.500 17.500 0 0 1 3 9.500z" fill="#34a853" />
    <circle cx="18" cy="18" r="8.500" fill="#fff" />
    <circle cx="18" cy="18" r="6.500" fill="#4285f4" />
  </svg>
);
const FilesLogo = () => (
  <svg width="32" height="30" viewBox="0 0 34 32">
    <path d="M1 2h13l3 4h16v4H1z" fill="#d9a21b" />
    <rect x="1" y="6" width="32" height="25" rx="1" fill="#fbd75b" />
    <path d="M8 31V19h18v12h-6v-7h-6v7z" fill="#2f8fd8" />
  </svg>
);
const ToolLogo = () => (
  <svg width="38" height="36" viewBox="0 0 38 36">
    <rect x="1" y="1" width="34" height="28" fill="#303438" stroke="#ccc" strokeWidth="2" />
    <path d="M6 7l4 3-4 3M12 13h2" stroke="#fff" fill="none" />
    <path d="M14 22l8-7 6 6-8 7z" fill="#e03a3a" />
    <path d="M22 14l6-6 8 7-6 6z" fill="#3a8ae0" />
    <path d="M22 27l8-6 6 3-8 11-4-3z" fill="#a8d020" />
  </svg>
);
const NotepadLogo = ({ s = 34 }: { s?: number }) => (
  <svg width={s} height={s} viewBox="0 0 34 34">
    <path d="M10 2h19l3 26-6 3z" fill="#8a7a4a" />
    <path d="M9 2h19l2 24-26 4z" fill="#b9e0ec" />
    <path d="M2 27C8 18 9 10 9 2l5 24z" fill="#4f9fb0" />
    <path d="M10 2h18v2H10z" fill="#667" />
    <path d="M4 30l26-4 1 3-16 3z" fill="#e8f4f6" />
  </svg>
);
const VscodeLogo = () => (
  <svg width="36" height="36" viewBox="0 0 36 36">
    <path d="M26 1l9 4v26l-9 4L9 19l-6 5-3-2 6-4-6-5 3-2 6 4z" fill="#0a7fd0" />
    <path d="M26 1l9 4v26l-9 4z" fill="#24a8f2" />
    <path d="M26 10l-11 8 11 8z" fill="#41332f" />
  </svg>
);
const DiscordLogo = () => (
  <svg width="40" height="42" viewBox="0 0 40 42">
    <ellipse cx="18" cy="18" rx="18" ry="18" fill="#5865f2" />
    <path d="M8 14c5-4 15-4 20 0l2 11c-3 2-5 3-7 3l-1-3h-8l-1 3c-2 0-4-1-7-3z" fill="#fff" />
    <circle cx="14" cy="19" r="2.300" fill="#5865f2" />
    <circle cx="22" cy="19" r="2.300" fill="#5865f2" />
    <ellipse cx="27" cy="30" rx="11" ry="12" fill="#f05a5a" />
    <circle cx="27" cy="30" r="4.500" fill="#fff" />
  </svg>
);
const CustomLogo = () => (
  <svg width="36" height="36" viewBox="0 0 36 36">
    <rect width="36" height="36" fill="#111" />
    <rect x="1" y="1" width="10.500" height="10.500" fill="#1a7a1a" />
    <rect x="12.500" y="1" width="10.500" height="10.500" fill="#d8d8d8" />
    <rect x="24" y="1" width="11" height="10.500" fill="#b02020" />
    <rect x="1" y="12.500" width="10.500" height="10.500" fill="#d8d8d8" />
    <rect x="12.500" y="12.500" width="10.500" height="10.500" fill="#0000a0" />
    <rect x="24" y="12.500" width="11" height="10.500" fill="#d8d8d8" />
    <rect x="1" y="24" width="10.500" height="11" fill="#0a5a0a" />
    <rect x="12.500" y="24" width="10.500" height="11" fill="#d8d8d8" />
    <rect x="24" y="24" width="11" height="11" fill="#d8d8d8" />
    <path d="M3 15h6v6H3z" fill="#1a7a1a" />
    <path d="M14 22l8-8M14 14l8 8" stroke="#fff" />
    <path d="M14 6l7-3M14 3l7 6" stroke="#0000a0" />
    <path d="M25 8l3-4 2 4 3-4M25 18h9M30 14v7" stroke="#b02020" />
    <path d="M25 33v-6h3v6h3v-6h3" stroke="#b02020" fill="none" />
    <path d="M14 29h8M18 26v7" stroke="#0000a0" />
  </svg>
);

const NoteGearLines = () => (
  <svg width="14" height="12" viewBox="0 0 14 12" fill="none" stroke="#c4c4c4">
    <path d="M1 9l6-6 6 6" />
  </svg>
);

const App = () => {
  return (
    <Page>
      <GlobalStyle />
      <Desk>
        <DeskRow>
          <EdgeStrip />
          <ActivityBar>
            <CircleUser size={26} strokeWidth={1.3} />
            <GearIcon size={26} strokeWidth={1.3} />
          </ActivityBar>
          <Editor>
            <PanelEdge />
          </Editor>
        </DeskRow>
        <VsStatus>
          <RemoteBtn>
            <svg width="14" height="16" viewBox="0 0 14 16" fill="none" stroke="#fff" strokeWidth="1.2">
              <path d="M1 9l4 3-3 3M13 1L8 5l4 4" />
            </svg>
          </RemoteBtn>
          <Restricted>
            <ShieldCheck size={15} strokeWidth={1.5} />
            Restricted Mode
          </Restricted>
          <StatusCounts>
            <CircleX size={14} strokeWidth={1.5} /> 0 <TriangleAlert size={14} strokeWidth={1.5} /> 0
          </StatusCounts>
          <StatusRight>
            <StatusPos>Ln 16, Col 30</StatusPos>
            <span>Spaces: 4</span>
            <span>UTF-8</span>
            <span>CRLF</span>
            <span>Plain Text</span>
            <svg width="16" height="18" viewBox="0 0 16 18" fill="none" stroke="#f2f2f2">
              <circle cx="6" cy="7" r="3.500" />
              <path d="M1 17c0-4 3-6 6-6M8 2h7v6h-3M8 17l3-6" />
            </svg>
            <Bell size={16} strokeWidth={1.4} />
          </StatusRight>
        </VsStatus>
      </Desk>

      <QtWindow>
        <TopEdge />
        <MenuBar>
          <MenuTab $w={66} $dim>File</MenuTab>
          <MenuTab $w={127} $active>Waveform</MenuTab>
          <MenuTab $w={83}>Tools</MenuTab>
          <MenuTab $w={158}>Configuration</MenuTab>
          <MenuRight>
            <HelpIcon><RefreshIcon /></HelpIcon>
            <HelpIcon><PanelUpIcon /></HelpIcon>
            <HelpIcon><RoundBlue ch="?" /></HelpIcon>
            <HelpIcon><RoundBlue ch="i" /></HelpIcon>
          </MenuRight>
        </MenuBar>
        <Ribbon>
          <Group $w={300}>
            <GroupBody>
              <OpenTile>
                <IconSlot><OpenIcon /></IconSlot>
                Open<br />Waveform
              </OpenTile>
              <ListBox $w={188} $ml={9}>
                <ListItems>
                  <ListItem><UpdateIcon />Update</ListItem>
                  <ListItem><PrintIcon />Print</ListItem>
                  <ListItem><ExportIcon />Export</ListItem>
                  <ListItem><DumpIcon />Dump Screen</ListItem>
                  <ListItem><DumpIcon />Dump All Screens</ListItem>
                </ListItems>
                <ListScroll>
                  <ScrollStep><ArrowUp /></ScrollStep>
                  <ScrollStep><ArrowDown /></ScrollStep>
                  <ScrollStep><ArrowDown /></ScrollStep>
                </ListScroll>
              </ListBox>
            </GroupBody>
            <GroupLabel>File</GroupLabel>
          </Group>
          <Group $w={141}>
            <GroupBody>
              <BigTool $w={71} $ml={2}>
                <IconSlot><WaveViewIcon /></IconSlot>
                Wave<br />View
              </BigTool>
              <BigTool $w={71}>
                <IconSlot><TableViewIcon /></IconSlot>
                Table<br />View
              </BigTool>
            </GroupBody>
            <GroupLabel>Add</GroupLabel>
          </Group>
          <Group $w={466}>
            <GroupBody>
              <ListBox $w={197} $ml={4}>
                <ListItems>
                  <ListItem><XYIcon />X-Y</ListItem>
                  <ListItem><EyeIcon />Eye Diagram</ListItem>
                  <ListItem><TabularIcon />Tabular</ListItem>
                  <ListItem><HistIcon />Histogram</ListItem>
                  <ListItem><SmithIcon />Smith Chart</ListItem>
                </ListItems>
                <ListScroll>
                  <ScrollStep><ArrowUp /></ScrollStep>
                  <ScrollStep><ArrowDown /></ScrollStep>
                  <ScrollStep><ArrowDown /></ScrollStep>
                </ListScroll>
              </ListBox>
              <ToolGrid>
                <ToolRow><CursorIcon />Cursor<MiniCaret /></ToolRow>
                <ToolRow><RadixIcon />Radix<MiniCaret /></ToolRow>
                <ToolRow><ActionIcon />Action<MiniCaret /></ToolRow>
                <ToolRow><SigNameIcon />SigName<MiniCaret /></ToolRow>
                <ToolRow><DisplayIcon />Display<MiniCaret /></ToolRow>
                <ToolRow><HeightIcon />Height<MiniCaret /></ToolRow>
              </ToolGrid>
            </GroupBody>
            <GroupLabel>Panel</GroupLabel>
          </Group>
          <Group $w={479}>
            <GroupBody>
              <BigTool $w={98}>
                <IconSlot><FxIcon /></IconSlot>
                Equation<br />Builder
              </BigTool>
              <BigTool $w={91}>
                <IconSlot><MeasureIcon /></IconSlot>
                Measure<br />Tool
              </BigTool>
              <BigTool $w={76}>
                <IconSlot><BinocularIcon /></IconSlot>
                Signal<br />Finder
              </BigTool>
              <ListBox $w={212} $ml={0}>
                <ListItems>
                  <ListItem><FftIcon />FFT/DFT</ListItem>
                  <ListItem><ConvIcon from="#2f6fb8" to="#d01818" />D to A</ListItem>
                  <ListItem><ConvIcon from="red" to="#2f6fb8" />A to D</ListItem>
                  <ListItem><JitterIcon />Jitter vs. Time</ListItem>
                  <ListItem><HspiceIcon />HSPICE Measure</ListItem>
                </ListItems>
                <ListScroll>
                  <ScrollStep><ArrowUp /></ScrollStep>
                  <ScrollStep><ArrowDown /></ScrollStep>
                  <ScrollStep><ArrowDown /></ScrollStep>
                </ListScroll>
              </ListBox>
            </GroupBody>
            <GroupLabel>Utilities</GroupLabel>
          </Group>
          <Group $w={70}>
            <GroupBody>
              <BigTool $w={64}>
                <IconSlot><FlatButton><AxisIcon /></FlatButton></IconSlot>
                &nbsp;<br />Axis
              </BigTool>
            </GroupBody>
          </Group>
          <Group $w={169}>
            <GroupBody>
              <ToolColumn>
                <ToolRow><UndoIcon />Undo</ToolRow>
                <ToolRow><DeleteIcon />Delete All</ToolRow>
                <ToolRow><SelectIcon />Select View&nbsp;&nbsp;&nbsp;<MiniCaret /></ToolRow>
              </ToolColumn>
            </GroupBody>
          </Group>
          <Group $w={101}>
            <GroupBody>
              <BigTool $w={96}>
                <IconSlot><FlatButton><PaletteIcon /></FlatButton></IconSlot>
                &nbsp;<br />Settings
              </BigTool>
            </GroupBody>
          </Group>
        </Ribbon>
        <Body>
          <Dock>
            <DockHead>
              <DockTab>WaveForm</DockTab>
              <DockBtns>
                <svg width="14" height="15" viewBox="0 0 14 15" fill="none" stroke="#111" strokeWidth="1.6">
                  <rect x="4.500" y="1" width="8" height="8" />
                  <rect x="1" y="5.500" width="8" height="8" fill="#d4d0c8" />
                </svg>
                <span>✕</span>
              </DockBtns>
            </DockHead>
            <FilterRow $h={38}>
              <FilterLabel>Filter:<MiniCaret $flush /></FilterLabel>
              <Combo $w={263} $muted>
                <ComboText>(on toplevel)</ComboText>
                <ComboArrow><ArrowDown $color="#8a8a8a" /></ComboArrow>
              </Combo>
              <GearSlot><FilterGear /></GearSlot>
            </FilterRow>
            <TreeBox>
              <TreeRow $pad={9}>
                <Expander>+</Expander>
                <DocIcon fill="#fff" />
                <TreeText>D0:Freq.ac</TreeText>
              </TreeRow>
              <TreeRow $pad={9}>
                <Expander>−</Expander>
                <DocIcon fill="#f4ea10" />
                <TreeText>D0:Freq.ac</TreeText>
              </TreeRow>
              <TreeRow $pad={45}>
                <TreeStub />
                <SelectedRow>
                  <ModuleIcon />
                  toplevel
                </SelectedRow>
              </TreeRow>
            </TreeBox>
            <FilterRow $h={46} $pt={5}>
              <FilterLabel>Filter:<MiniCaret $flush /></FilterLabel>
              <Combo $w={111}>
                <ComboArrow><ArrowDown /></ComboArrow>
              </Combo>
              <PinSlot><PinIcon /></PinSlot>
              <Combo $w={121}>
                All
                <ComboArrow><ArrowDown /></ComboArrow>
              </Combo>
              <GearSlot><FilterGear /></GearSlot>
            </FilterRow>
            <SignalBox>
              <SignalChip>
                <ResistorIcon />
                R1:1
              </SignalChip>
            </SignalBox>
          </Dock>
          <RightPane>
            <TabRow>
              <WaveTab>waveview 1 <span>✕</span></WaveTab>
            </TabRow>
            <Toolbar>
              <ToolSep />
              <ToolCell>
                <ActiveZoom><Lens s={20} /></ActiveZoom>
              </ToolCell>
              {toolGroupA.map((g) => <ToolCell key={g.key}>{g}</ToolCell>)}
              <ToolSep $ml={8} $mr={4} />
              {toolGroupB.map((g) => <ToolCell key={g.key}>{g}</ToolCell>)}
              <ToolSep $ml={8} $mr={2} />
              {toolGroupC.map((g) => <ToolCell key={g.key}>{g}</ToolCell>)}
              <ToolSep $ml={5} $mr={3} />
              {toolGroupD.map((g) => <ToolCell key={g.key}>{g}</ToolCell>)}
              <ToolSep $ml={4} $mr={3} />
              <ToolCell>
                <ToolGlyph>
                  <path d="M3 15L15 2l6 7-11 12H7z" fill="#f4b4c0" stroke="#555" />
                  <path d="M3 23h18" stroke="#1a3ac8" strokeWidth="1.6" />
                </ToolGlyph>
              </ToolCell>
              <ToolCell>
                <ToolGlyph>
                  <path d="M6 2v21M6 5h11M6 12h15M6 19h11M17 5l4 7-4 7" stroke="#333" strokeWidth="1.5" />
                </ToolGlyph>
              </ToolCell>
              <ToolCell>
                <svg width="10" height="24" viewBox="0 0 10 24"><path d="M1 17h8l-4 5z" fill="#bbb" /></svg>
              </ToolCell>
              <ToolSep $ml={-3} $mr={0} />
              <OffsetLabel>x</OffsetLabel>
              <OffsetInput>0</OffsetInput>
            </Toolbar>
            <ChartPane>
              <Plot />
              <HScrollRow>
                <HTrack $w={97} $ml={24}>
                  <HArrowL />
                  <HThumb $inset={3} />
                  <HArrowR />
                </HTrack>
                <HTrack $w={1305} $ml={70}>
                  <HArrowL />
                  <HThumb $inset={0} />
                  <HArrowR />
                </HTrack>
              </HScrollRow>
            </ChartPane>
          </RightPane>
        </Body>
        <WinStatus>
          <Progress>
            <ProgressFill />
            <ProgressPct>0%</ProgressPct>
          </Progress>
          <Grip width="16" height="16" viewBox="0 0 16 16" stroke="#8a8780">
            <path d="M1 15L15 1M5 15L15 5M9 15l6-6M13 15l2-2" />
          </Grip>
        </WinStatus>
      </QtWindow>

      <Notepad>
        <NoteTitle>
          <NotepadLogo s={22} />
          Uin - Notepad
          <NoteControls>
            <NoteControl>
              <svg width="16" height="16" viewBox="0 0 16 16" stroke="#222"><path d="M1 8h14" /></svg>
            </NoteControl>
            <NoteControl>
              <svg width="16" height="16" viewBox="0 0 16 16" fill="none" stroke="#222"><rect x="1.500" y="1.500" width="13" height="13" /></svg>
            </NoteControl>
            <NoteControl>
              <svg width="16" height="16" viewBox="0 0 16 16" stroke="#222"><path d="M1 1l14 14M15 1L1 15" /></svg>
            </NoteControl>
          </NoteControls>
        </NoteTitle>
        <NoteMenu>
          <span>File</span>
          <span>Edit</span>
          <span>Format</span>
          <span>View</span>
          <span>Help</span>
        </NoteMenu>
        <NoteBody>
          <NoteText>
            Joshua Clapp<br />
            930004089<br />
            Lab 3<Caret />
          </NoteText>
          <NoteScroll>
            <NoteGearLines />
            <svg width="14" height="12" viewBox="0 0 14 12" fill="none" stroke="#c4c4c4"><path d="M1 3l6 6 6-6" /></svg>
          </NoteScroll>
        </NoteBody>
        <NoteStatus>
          <NoteCell $w={38}>Ln 1</NoteCell>
          <NoteCell $w={75}>100%</NoteCell>
          <NoteCell $w={179}>Windows (CRLF)</NoteCell>
          <NoteLast>UTF-8</NoteLast>
          <Grip width="10" height="10" viewBox="0 0 10 10" fill="#bdbdbd" stroke="none">
            <path d="M7 0h2v2H7zM4 4h2v2H4zM7 4h2v2H7zM0 7h2v2H0zM4 7h2v2H4zM7 7h2v2H7z" />
          </Grip>
        </NoteStatus>
      </Notepad>

      <Taskbar>
        <TaskPlain $w={79} $pl={6}><WindowsLogo /></TaskPlain>
        <TaskPlain $w={72}><SearchGlyph /></TaskPlain>
        <TaskPlain $w={11} />
        <TaskDivider />
        <TaskApp $ml={26}><ChromeLogo /></TaskApp>
        <TaskApp><FilesLogo /></TaskApp>
        <TaskApp><GearIcon size={34} color="#fff" strokeWidth={2.4} /></TaskApp>
        <TaskApp><ToolLogo /></TaskApp>
        <TaskApp $active $w={73} $ml={8}><NotepadLogo /></TaskApp>
        <TaskApp $ml={8}><VscodeLogo /></TaskApp>
        <TaskApp><DiscordLogo /></TaskApp>
        <TaskApp $ml={17}><CustomLogo /></TaskApp>
        <TrayArea>
          <TaskDivider />
          <DesktopLabel>Desktop</DesktopLabel>
          <Deskband>
            <svg width="18" height="34" viewBox="0 0 18 34">
              <path d="M0 0h7v34H0z" fill="#f4d060" />
              <circle cx="12" cy="13" r="5" fill="#5a4030" />
              <path d="M5 33c0-10 3-13 7-13s6 3 6 13z" fill="#4a9a78" />
            </svg>
            Joshua Clapp
            <More>»</More>
          </Deskband>
          <TraySlot>
            <svg width="20" height="12" viewBox="0 0 20 12" fill="none" stroke="#eee" strokeWidth="1.4"><path d="M1 11l9-9 9 9" /></svg>
          </TraySlot>
          <TraySlot>
            <svg width="26" height="24" viewBox="0 0 26 24" fill="none" stroke="#eee" strokeWidth="1.3">
              <rect x="2" y="1" width="22" height="16" />
              <path d="M13 17v5M7 22h12" />
              <rect x="1" y="1" width="7" height="10" fill="#3a302c" />
            </svg>
          </TraySlot>
          <TraySlot>
            <svg width="26" height="24" viewBox="0 0 26 24" fill="none" stroke="#eee" strokeWidth="1.3">
              <rect x="7" y="6" width="18" height="14" fill="#f2f2f2" />
              <path d="M4 1v5M8 1v5M1 6h10v4l-5 4-5-4z" />
            </svg>
          </TraySlot>
          <TraySlot>
            <svg width="26" height="28" viewBox="0 0 26 28" fill="none" stroke="#ddd" strokeWidth="1.2">
              <path d="M2 10h4l6-7v22l-6-7H2zM15 10c2 2 2 6 0 8M18 6c4 4 4 12 0 16M22 3c5 6 5 16 0 22" />
            </svg>
          </TraySlot>
          <Clock>
            <span>11:26 PM</span>
            <span>2/18/2023</span>
          </Clock>
          <Notify>
            <svg width="26" height="26" viewBox="0 0 26 26" fill="none" stroke="#eee" strokeWidth="1.3">
              <path d="M2 2h22v18h-7l-4 4-4-4H2z" />
            </svg>
          </Notify>
        </TrayArea>
      </Taskbar>
    </Page>
  );
};

export default App;
